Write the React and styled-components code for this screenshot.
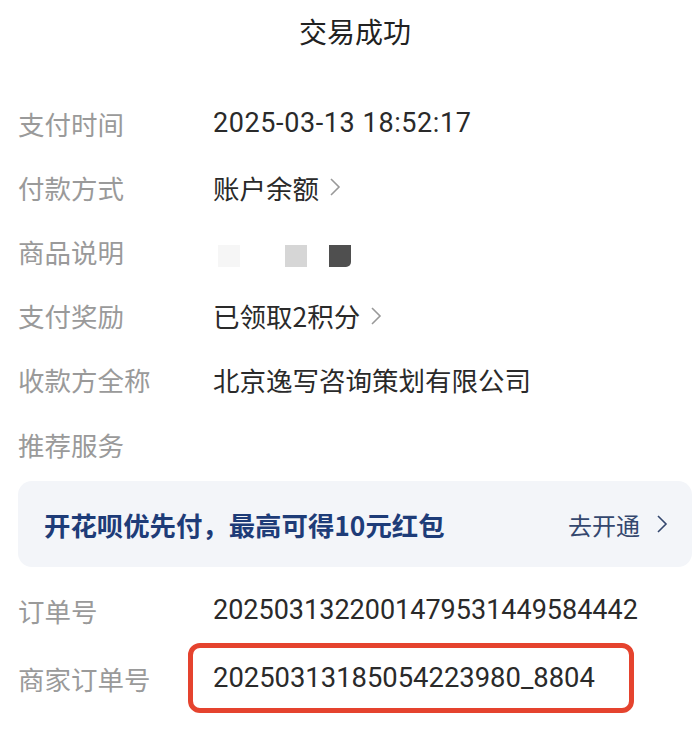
import React from 'react';
import styled, { createGlobalStyle } from 'styled-components';

const GlobalStyle = createGlobalStyle`
  html, body {
    margin: 0;
    padding: 0;
    background: #fff;
  }
  body {
    font-family: "Noto Sans CJK SC", "Noto Sans", sans-serif;
  }
`;

const Page = styled.div`
  width: 700px;
  height: 740px;
  overflow: hidden;
  background: #fff;
  padding: 0 8px 0 18px;
  box-sizing: border-box;
`;

const Title = styled.h1`
  margin: 0;
  padding-top: 11px;
  height: 91px;
  text-align: center;
  font-size: 28px;
  font-weight: 400;
  color: #222;
  box-sizing: border-box;
`;

const List = styled.div`
  display: flex;
  flex-direction: column;
`;

const Row = styled.div`
  display: flex;
  align-items: center;
  height: 64.2px;
  margin-top: ${p => p.$mt || 0}px;
`;

const Label = styled.div`
  width: 195px;
  flex: none;
  font-size: 26.5px;
  color: #9a9a9a;
`;

const Value = styled.div`
  display: flex;
  align-items: center;
  gap: 10px;
  font-size: ${p => (p.$num ? '27px' : '26.5px')};
  letter-spacing: ${p => p.$spacing || 0}px;
  color: #2a2a2a;
  font-family: ${p => (p.$num ? '"Roboto", "Noto Sans CJK SC", sans-serif' : 'inherit')};
`;

const Chevron = styled.svg`
  width: 12px;
  height: 20px;
  flex: none;
`;

const Blocks = styled.div`
  display: flex;
  align-items: center;
  padding-left: 5px;
  padding-top: 10px;
`;

const Block = styled.span`
  width: 22px;
  height: 22px;
  background: ${p => p.$c};
  margin-right: ${p => p.$mr}px;
  border-radius: ${p => (p.$r ? '0 0 5px 0' : '0')};
`;

const Banner = styled.div`
  margin: 5px 0 11px 0;
  height: 86px;
  border-radius: 14px;
  background: #f3f5f9;
  display: flex;
  align-items: center;
  justify-content: space-between;
  padding: 0 24px 0 26px;
`;

const BannerText = styled.div`
  font-size: 26.4px;
  font-weight: 700;
  color: #1e3c78;
`;

const BannerLink = styled.div`
  display: flex;
  align-items: center;
  gap: 16px;
  font-size: 24px;
  color: #34476e;
`;

const Boxed = styled.div`
  margin-left: -25px;
  padding: 0 34px 0 20px;
  height: 60px;
  display: flex;
  align-items: center;
  border: 5px solid #e5432e;
  border-radius: 12px;
  font-family: "Roboto", "Noto Sans CJK SC", sans-serif;
  font-size: 27.4px;
  color: #2a2a2a;
`;

const Arrow = ({ color = '#999' }) => (
  <Chevron viewBox="0 0 12 20">
    <path d="M2 2 L10 10 L2 18" fill="none" stroke={color} strokeWidth="1.6" />
  </Chevron>
);

export default function App() {
  return (
    <>
      <GlobalStyle />
      <Page>
        <Title>交易成功</Title>
        <List>
          <Row>
            <Label>支付时间</Label>
            <Value $num $spacing={0.6}>2025-03-13 18:52:17</Value>
          </Row>
          <Row>
            <Label>付款方式</Label>
            <Value>账户余额<Arrow /></Value>
          </Row>
          <Row>
            <Label>商品说明</Label>
            <Blocks>
              <Block $c="#f6f6f6" $mr={45} />
              <Block $c="#d6d6d6" $mr={22} />
              <Block $c="#4f4f4f" $mr={0} $r />
            </Blocks>
          </Row>
          <Row>
            <Label>支付奖励</Label>
            <Value>已领取2积分<Arrow /></Value>
          </Row>
          <Row>
            <Label>收款方全称</Label>
            <Value>北京逸写咨询策划有限公司</Value>
          </Row>
          <Row>
            <Label>推荐服务</Label>
          </Row>
        </List>
        <Banner>
          <BannerText>开花呗优先付，最高可得10元红包</BannerText>
          <BannerLink>去开通<Arrow color="#34476e" /></BannerLink>
        </Banner>
        <List>
          <Row>
            <Label>订单号</Label>
            <Value $num>2025031322001479531449584442</Value>
          </Row>
          <Row $mt={4}>
            <Label>商家订单号</Label>
            <Boxed>20250313185054223980_8804</Boxed>
          </Row>
        </List>
      </Page>
    </>
  );
}
